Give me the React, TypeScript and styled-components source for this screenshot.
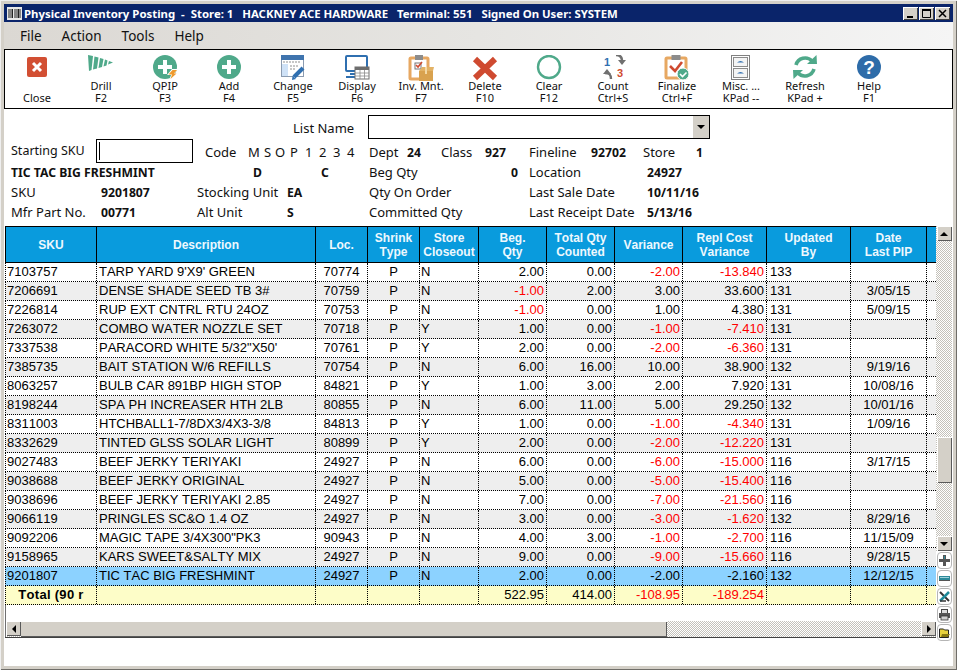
import React from 'react'
import styled, { createGlobalStyle } from 'styled-components'

const GlobalStyle = createGlobalStyle`
  html, body {
    margin: 0;
    padding: 0;
    background: #d4d0c8;
  }
`

const UI_FONT = '"Noto Sans", "Open Sans", sans-serif'
const GRID_FONT = '"Liberation Sans", Arial, sans-serif'
const GREEN = '#4fa98a'
const SILVER = '#d4d0c8'
const DITHER = `repeating-conic-gradient(#ffffff 0 25%, #c4c1ba 0 50%) 0 0 / 2px 2px`

const Window = styled.div`
  box-sizing: border-box;
  width: 957px;
  height: 670px;
  overflow: hidden;
  padding: 4px 4px 4px 4px;
  background: ${SILVER};
  box-shadow: inset 1px 1px 0 #efefef, inset -1px -1px 0 #6f6d68;
  font-family: ${UI_FONT};
`

const Inner = styled.div`
  height: 662px;
  background: #fff;
  display: flex;
  flex-direction: column;
`

const TitleBar = styled.div`
  height: 18px;
  flex: none;
  background: #0a246a;
  color: #fff;
  display: flex;
  align-items: center;
  padding: 0 3px 0 3px;
  font-size: 11.4px;
  font-weight: 700;
  white-space: pre;
`

const TitleText = styled.span`
  margin-left: 2px;
  flex: 1;
`

const TitleControls = styled.div`
  display: flex;
  gap: 1px;
`

const TitleButton = styled.div`
  width: 15px;
  height: 13px;
  background: ${SILVER};
  box-shadow: inset 1px 1px 0 #fff, inset -1px -1px 0 #404040;
  display: flex;
  align-items: center;
  justify-content: center;
`

const MenuBar = styled.div`
  height: 27px;
  flex: none;
  box-sizing: border-box;
  background: linear-gradient(90deg, #dbd8d3 0%, #e6e5e2 50%, #f5f5f5 100%);
  display: flex;
  align-items: center;
  gap: 20px;
  padding: 1px 0 0 16px;
  font-size: 13.5px;
  color: #111;
`

const Toolbar = styled.div`
  height: 60px;
  flex: none;
  box-sizing: border-box;
  border: 1px solid #000;
  display: flex;
  background: #fff;
`

const ToolButton = styled.div`
  width: 64px;
  flex: none;
  padding-top: 5px;
  display: flex;
  flex-direction: column;
  align-items: center;
`

const IconBox = styled.svg`
  width: 26px;
  height: 26px;
  margin-bottom: -1px;
  display: block;
  flex: none;
`

const ToolLabel = styled.div`
  font-size: 11px;
  line-height: 12px;
  height: 12px;
  color: #111;
  text-align: center;
  white-space: nowrap;
`

const Form = styled.div`
  height: 117px;
  flex: none;
  box-sizing: border-box;
  padding: 6px 0 0 7px;
  font-size: 13px;
  color: #111;
`

const Value = styled.span<{ $right?: boolean }>`
  font-size: 12.2px;
  font-weight: 700;
  text-align: ${({ $right }) => ($right ? 'right' : 'left')};
`

const FormRow = styled.div<{ $cols: string; $height?: number; $line?: number }>`
  display: grid;
  grid-template-columns: ${({ $cols }) => $cols};
  height: ${({ $height }) => $height ?? 20}px;
  line-height: ${({ $line }) => $line ?? 21}px;
  white-space: nowrap;

  ${Value} {
    line-height: ${({ $line }) => ($line ?? 21) + 1}px;
  }
`

const CodeLetters = styled.span`
  display: grid;
  grid-template-columns: 16px 11px 15px 15px 14px 14px 14px 14px;
`

const Combo = styled.div`
  box-sizing: border-box;
  height: 24px;
  border: 1px solid #000;
  display: flex;
  justify-content: flex-end;
`

const ComboButton = styled.div`
  width: 16px;
  background: ${SILVER};
  display: flex;
  align-items: center;
  justify-content: center;
`

const SkuInput = styled.div`
  box-sizing: border-box;
  height: 24px;
  border: 1px solid #000;
  background: #fff;
  display: flex;
  align-items: center;
  padding-left: 2px;
`

const Caret = styled.span`
  width: 1px;
  height: 18px;
  background: #000;
`

const StartLabel = styled.span`
  font-size: 12.5px;
  line-height: 23px;
`

const GridFrame = styled.div`
  flex: none;
  height: 412px;
  display: flex;
  margin-left: 1px;
`

const GridMain = styled.div`
  width: 931px;
  flex: none;
  display: flex;
  flex-direction: column;
  border-bottom: 1px solid #404040;
  box-sizing: border-box;
  font-family: ${GRID_FONT};
  font-kerning: none;
`

const COLUMNS = '91px 219px 52px 52px 59px 68px 68px 68px 84px 84px 76px 9px'

const HeaderRow = styled.div`
  display: grid;
  grid-template-columns: ${COLUMNS};
  height: 37px;
  flex: none;
  box-sizing: border-box;
  background: #099bdd;
  border: solid #000;
  border-width: 1px 0 1px 1px;
`

const HeaderCell = styled.div<{ $last?: boolean }>`
  display: flex;
  align-items: center;
  justify-content: center;
  text-align: center;
  color: #eef8fd;
  font-size: 12px;
  line-height: 14px;
  font-weight: 700;
  white-space: pre;
  ${({ $last }) => ($last ? '' : 'border-right: 1px solid #000;')}
`

const rowBackgrounds = {
  plain: '#ffffff',
  zebra: '#eeeeee',
  selected: '#8cd2ff',
  total: '#fdfdc8',
}

const DataRow = styled.div<{ $kind: keyof typeof rowBackgrounds }>`
  display: grid;
  grid-template-columns: ${COLUMNS};
  height: 19px;
  flex: none;
  box-sizing: border-box;
  background: ${({ $kind }) => rowBackgrounds[$kind]};
  border-left: 1px dotted #000;
  border-bottom: 1px dotted #000;
  font-size: 13px;
  line-height: 18px;
`

const Cell = styled.div<{ $align: string; $pad: number; $red?: boolean; $bold?: boolean; $open?: boolean }>`
  box-sizing: border-box;
  overflow: hidden;
  white-space: nowrap;
  text-align: ${({ $align }) => $align};
  padding: 0 ${({ $align, $pad }) => ($align === 'right' ? $pad : 0)}px 0 ${({ $align, $pad }) => ($align === 'left' ? $pad : 0)}px;
  color: ${({ $red }) => ($red ? '#ff0000' : '#000')};
  font-weight: ${({ $bold }) => ($bold ? 700 : 400)};
  letter-spacing: ${({ $bold }) => ($bold ? '0.3px' : '0')};
  ${({ $open }) => ($open ? '' : 'border-right: 1px dotted #000;')}
`

const GridSpacer = styled.div`
  flex: 1;
  border-left: 1px solid #707070;
`

const HScroll = styled.div`
  height: 16px;
  flex: none;
  display: flex;
  background: ${DITHER};
  border-left: 1px solid #707070;
  box-sizing: border-box;
`

const HThumb = styled.div`
  width: 646px;
  flex: none;
  background: ${SILVER};
  box-shadow: inset 0 1px 0 #fff, inset -1px -1px 0 #5a5a5a;
`

const ScrollFill = styled.div`
  flex: 1;
`

const ScrollButton = styled.div`
  width: 15px;
  height: 15px;
  flex: none;
  background: ${SILVER};
  box-shadow: inset 1px 1px 0 #fff, inset -1px -1px 0 #5a5a5a;
  display: flex;
  align-items: center;
  justify-content: center;
`

const Rail = styled.div`
  width: 17px;
  flex: none;
  display: flex;
  flex-direction: column;
`

const VScroll = styled.div`
  height: 325px;
  flex: none;
  display: flex;
  flex-direction: column;
  align-items: center;
  background: ${DITHER};
  width: 16px;
`

const VThumb = styled.div`
  width: 15px;
  height: 46px;
  flex: none;
  margin-top: 196px;
  background: ${SILVER};
  box-shadow: inset 1px 1px 0 #fff, inset -1px -1px 0 #5a5a5a;
`

const RailButtons = styled.div`
  display: flex;
  flex-direction: column;
  gap: 1px;
  padding: 1px 0 0 1px;
`

const RailButton = styled.div`
  box-sizing: border-box;
  width: 15px;
  height: 17px;
  background: #fff;
  border: 1px solid #b5b5b5;
  border-radius: 4px;
  display: flex;
  align-items: center;
  justify-content: center;
`

const Arrow = ({ dir }: { dir: 'up' | 'down' | 'left' | 'right' }) => {
  const points = {
    up: '0,5 8,5 4,1',
    down: '0,1 8,1 4,5',
    left: '6,0 6,8 2,4',
    right: '2,0 2,8 6,4',
  }[dir]
  return (
    <svg width="8" height={dir === 'up' || dir === 'down' ? 6 : 8} viewBox={dir === 'up' || dir === 'down' ? '0 0 8 6' : '0 0 8 8'}>
      <polygon points={points} fill="#000" />
    </svg>
  )
}

const PlusDisc = () => (
  <>
    <circle cx="13" cy="12" r="12" fill={GREEN} />
    <rect x="11" y="5" width="4" height="14" fill="#fff" />
    <rect x="6" y="10" width="14" height="4" fill="#fff" />
  </>
)

const icons: Record<string, React.ReactNode> = {
  close: (
    <>
      <rect x="3" y="2" width="20" height="20" rx="2" fill="#d24f33" />
      <path d="M9 8l8 8M17 8l-8 8" stroke="#fff" strokeWidth="3" />
    </>
  ),
  drill: (
    <g fill={GREEN}>
      <polygon points="0,0 5,1 3.5,15 1,16" />
      <polygon points="6.5,1.500 10.5,2.500 9,13.500 5,14.500" />
      <polygon points="12,3 15.5,4 14,12 10.5,13" />
      <polygon points="17,4.500 19.5,5.500 18.5,10.500 15.5,11.500" />
      <polygon points="21,6 25,7.500 20,9.500" />
    </g>
  ),
  qpip: (
    <>
      <PlusDisc />
      <polygon points="20,14 26,14 23,18 26,18 17,26 19,20 15,20" fill="#fff" />
      <polygon points="20.5,15 25,15 22,18.5 24.5,18.5 18.5,24 20,19.5 16.5,19.5" fill="#ee9a2e" />
    </>
  ),
  add: <PlusDisc />,
  change: (
    <>
      <rect x="1.5" y="0.5" width="22" height="21" fill="#fff" stroke="#8b9bb0" />
      <rect x="1" y="0" width="23" height="5" fill="#3f74ae" />
      <rect x="2" y="9" width="6" height="12" fill="#cfe2f7" />
      <path d="M3 7h18M10 11h9M10 14h6" stroke="#8f8f8f" strokeDasharray="2 1" />
      <path d="M23 13L14 22" stroke="#2f6fb0" strokeWidth="4" />
      <polygon points="12,25 12.5,21 16,24" fill="#2f6fb0" />
    </>
  ),
  display: (
    <>
      <rect x="2" y="1" width="21" height="15" rx="1" fill="#fff" stroke="#2f6fb0" strokeWidth="2" />
      <path d="M6 19h5M2 22h9" stroke="#2f6fb0" strokeWidth="2" />
      <rect x="11" y="12" width="14" height="12" fill="#fff" stroke="#6e6e6e" />
      <rect x="11" y="12" width="14" height="3" fill="#6e6e6e" />
      <path d="M11 18h14M11 21h14M16 15v9M20.5 15v9" stroke="#8a8a8a" strokeWidth="0.8" />
    </>
  ),
  inventory: (
    <>
      <rect x="2" y="3" width="18" height="21" rx="1" fill="#fff" stroke="#e7a862" strokeWidth="3" />
      <rect x="7" y="0" width="8" height="5" fill="#8c8c8c" />
      <rect x="7" y="8" width="6" height="6" fill="#fff" stroke="#777" />
      <path d="M8 10l2 2 4-5" stroke="#cf4a30" strokeWidth="1.6" fill="none" />
      <polygon points="11,16 14,12 26,12 25,16" fill="#e3b265" />
      <rect x="11" y="16" width="14" height="10" fill="#d9a24f" />
      <rect x="17" y="12" width="2" height="7" fill="#f3d9a6" />
    </>
  ),
  del: <path d="M3 4l20 19M23 4L3 23" stroke="#cf4a30" strokeWidth="6" />,
  clear: <circle cx="13" cy="12" r="11" fill="none" stroke={GREEN} strokeWidth="2.4" />,
  count: (
    <>
      <text x="4" y="11" fontFamily={GRID_FONT} fontSize="11" fontWeight="700" fill="#2f6fb0">1</text>
      <text x="17" y="22" fontFamily={GRID_FONT} fontSize="11" fontWeight="700" fill="#cf4a30">3</text>
      <path d="M16 0c5 0 6 3 6 6" fill="none" stroke="#707070" strokeWidth="2.4" />
      <polygon points="18,5 26,5 22,10" fill="#707070" />
      <path d="M11 24c0-5-2-6-6-6" fill="none" stroke="#707070" strokeWidth="2.4" />
      <polygon points="3,19 11,19 7,14" fill="#707070" />
    </>
  ),
  finalize: (
    <>
      <rect x="2" y="3" width="20" height="20" rx="1" fill="#fff" stroke="#e7a862" strokeWidth="3" />
      <rect x="7.5" y="0" width="9" height="5" fill="#8c8c8c" />
      <path d="M6 11l5 5 7-9" stroke="#cf4a30" strokeWidth="2.6" fill="none" />
      <circle cx="19" cy="19" r="6" fill={GREEN} stroke="#fff" />
      <path d="M16 19l2.5 2.5 4-4" stroke="#fff" strokeWidth="1.6" fill="none" />
    </>
  ),
  misc: (
    <>
      <rect x="3.5" y="0.5" width="18" height="24" fill="#fff" stroke="#808080" />
      <rect x="5.5" y="2.5" width="14" height="9" fill="#f4f4f4" stroke="#8c8c8c" />
      <rect x="5.5" y="13.5" width="14" height="9" fill="#f4f4f4" stroke="#8c8c8c" />
      <path d="M9 7.5q3.500-3 7 0zM9 18.500q3.500-3 7 0z" fill="#2f6fb0" />
    </>
  ),
  refresh: (
    <>
      <path d="M4 10A9.500 9.500 0 0 1 20 6" fill="none" stroke={GREEN} strokeWidth="3.600" />
      <polygon points="15,9 25,9 24.500,0" fill={GREEN} />
      <path d="M22 14A9.500 9.500 0 0 1 6 18" fill="none" stroke={GREEN} strokeWidth="3.600" />
      <polygon points="11,15 1,15 1.500,24" fill={GREEN} />
    </>
  ),
  help: (
    <>
      <circle cx="13" cy="12" r="12" fill="#2e6ca9" />
      <text x="13" y="19" textAnchor="middle" fontFamily={GRID_FONT} fontSize="19" fontWeight="700" fill="#fff">?</text>
    </>
  ),
}

const toolButtons: [string, string, string][] = [
  ['close', '', 'Close'],
  ['drill', 'Drill', 'F2'],
  ['qpip', 'QPIP', 'F3'],
  ['add', 'Add', 'F4'],
  ['change', 'Change', 'F5'],
  ['display', 'Display', 'F6'],
  ['inventory', 'Inv. Mnt.', 'F7'],
  ['del', 'Delete', 'F10'],
  ['clear', 'Clear', 'F12'],
  ['count', 'Count', 'Ctrl+S'],
  ['finalize', 'Finalize', 'Ctrl+F'],
  ['misc', 'Misc. ...', 'KPad --'],
  ['refresh', 'Refresh', 'KPad +'],
  ['help', 'Help', 'F1'],
]

const headers = ['SKU', 'Description', 'Loc.', 'Shrink\nType', 'Store\nCloseout', 'Beg.\nQty', 'Total Qty\nCounted', 'Variance', 'Repl Cost\nVariance', 'Updated\nBy', 'Date\nLast PIP', '']

const columnFormat: { align: string; pad: number }[] = [
  { align: 'left', pad: 1 },
  { align: 'left', pad: 2 },
  { align: 'center', pad: 0 },
  { align: 'center', pad: 0 },
  { align: 'left', pad: 1 },
  { align: 'right', pad: 2 },
  { align: 'right', pad: 2 },
  { align: 'right', pad: 2 },
  { align: 'right', pad: 2 },
  { align: 'left', pad: 3 },
  { align: 'center', pad: 0 },
]

const rows: string[][] = [
  ['7103757', "TARP YARD 9'X9' GREEN", '70774', 'P', 'N', '2.00', '0.00', '-2.00', '-13.840', '133', ''],
  ['7206691', 'DENSE SHADE SEED TB 3#', '70759', 'P', 'N', '-1.00', '2.00', '3.00', '33.600', '131', '3/05/15'],
  ['7226814', 'RUP EXT CNTRL RTU 24OZ', '70753', 'P', 'N', '-1.00', '0.00', '1.00', '4.380', '131', '5/09/15'],
  ['7263072', 'COMBO WATER NOZZLE SET', '70718', 'P', 'Y', '1.00', '0.00', '-1.00', '-7.410', '131', ''],
  ['7337538', 'PARACORD WHITE 5/32"X50\'', '70761', 'P', 'Y', '2.00', '0.00', '-2.00', '-6.360', '131', ''],
  ['7385735', 'BAIT STATION W/6 REFILLS', '70754', 'P', 'N', '6.00', '16.00', '10.00', '38.900', '132', '9/19/16'],
  ['8063257', 'BULB CAR 891BP HIGH STOP', '84821', 'P', 'Y', '1.00', '3.00', '2.00', '7.920', '131', '10/08/16'],
  ['8198244', 'SPA PH INCREASER HTH 2LB', '80855', 'P', 'N', '6.00', '11.00', '5.00', '29.250', '132', '10/01/16'],
  ['8311003', 'HTCHBALL1-7/8DX3/4X3-3/8', '84813', 'P', 'Y', '1.00', '0.00', '-1.00', '-4.340', '131', '1/09/16'],
  ['8332629', 'TINTED GLSS SOLAR LIGHT', '80899', 'P', 'Y', '2.00', '0.00', '-2.00', '-12.220', '131', ''],
  ['9027483', 'BEEF JERKY TERIYAKI', '24927', 'P', 'N', '6.00', '0.00', '-6.00', '-15.000', '116', '3/17/15'],
  ['9038688', 'BEEF JERKY ORIGINAL', '24927', 'P', 'N', '5.00', '0.00', '-5.00', '-15.400', '116', ''],
  ['9038696', 'BEEF JERKY TERIYAKI 2.85', '24927', 'P', 'N', '7.00', '0.00', '-7.00', '-21.560', '116', ''],
  ['9066119', 'PRINGLES SC&O 1.4 OZ', '24927', 'P', 'N', '3.00', '0.00', '-3.00', '-1.620', '132', '8/29/16'],
  ['9092206', 'MAGIC TAPE 3/4X300"PK3', '90943', 'P', 'N', '4.00', '3.00', '-1.00', '-2.700', '116', '11/15/09'],
  ['9158965', 'KARS SWEET&SALTY MIX', '24927', 'P', 'N', '9.00', '0.00', '-9.00', '-15.660', '116', '9/28/15'],
  ['9201807', 'TIC TAC BIG FRESHMINT', '24927', 'P', 'N', '2.00', '0.00', '-2.00', '-2.160', '132', '12/12/15'],
]

const totals = ['Total (90 r', '', '', '', '', '522.95', '414.00', '-108.95', '-189.254', '', '']

const railIcons = [
  <svg key="plus" width="11" height="11" viewBox="0 0 11 11">
    <path d="M4 0h3v4h4v3H7v4H4V7H0V4h4z" fill="#555" />
    <rect x="5" y="1" width="1" height="3" fill="#2d8a9a" />
  </svg>,
  <svg key="minus" width="11" height="5" viewBox="0 0 11 5">
    <rect width="11" height="5" fill="#2d8a9a" />
    <rect x="1" y="1" width="9" height="1" fill="#9fd3dc" />
    <rect y="4" width="11" height="1" fill="#555" />
  </svg>,
  <svg key="cancel" width="11" height="11" viewBox="0 0 11 11">
    <path d="M1 1l9 9" stroke="#333" strokeWidth="2" />
    <path d="M10 1L1 10" stroke="#1f8a9a" strokeWidth="2.500" />
    <path d="M1 10h6" stroke="#333" strokeWidth="1.500" />
  </svg>,
  <svg key="print" width="11" height="12" viewBox="0 0 11 12">
    <rect x="2.500" y="0.500" width="6" height="4" fill="#ddd" stroke="#444" />
    <rect x="0" y="4" width="11" height="5" fill="#555" />
    <rect x="2" y="7" width="7" height="4" fill="#cfcfcf" stroke="#333" strokeWidth="0.800" />
  </svg>,
  <svg key="folder" width="11" height="10" viewBox="0 0 11 10">
    <path d="M0.500 1h4l1 1h4v7.500H0.500z" fill="#e8d23c" stroke="#222" />
    <path d="M2 9l1-3h8l-2 3z" fill="#8a7a12" />
  </svg>,
]

function GridCells({ values, total, selected }: { values: string[]; total?: boolean; selected?: boolean }) {
  return (
    <>
      {values.map((value, i) => {
        const format = total && i === 0 ? { align: 'center', pad: 0 } : columnFormat[i]
        return (
          <Cell
            key={i}
            $align={format.align}
            $pad={format.pad}
            $bold={total && i === 0}
            $red={!selected && i >= 5 && i <= 8 && value.startsWith('-')}
          >
            {value}
          </Cell>
        )
      })}
      <Cell $align="left" $pad={0} $open />
    </>
  )
}

export default function App() {
  return (
    <>
      <GlobalStyle />
      <Window>
        <Inner>
          <TitleBar>
            <svg width="15" height="13" viewBox="0 0 15 13">
              <rect width="15" height="13" fill="#e8e8e8" />
              <path d="M2 2v9M4 2v9M5.500 2v9M8 2v9M10 2v9M11.500 2v9M13 2v9" stroke="#222" />
            </svg>
            <TitleText>{'Physical Inventory Posting  -  Store: 1   HACKNEY ACE HARDWARE   Terminal: 551   Signed On User: SYSTEM'}</TitleText>
            <TitleControls>
              <TitleButton>
                <svg width="9" height="9" viewBox="0 0 9 9"><rect x="1" y="7" width="6" height="2" fill="#000" /></svg>
              </TitleButton>
              <TitleButton>
                <svg width="9" height="9" viewBox="0 0 9 9"><path d="M0.500 1.500h8v7h-8z" fill="none" stroke="#000" /><rect y="0" width="9" height="2" fill="#000" /></svg>
              </TitleButton>
              <TitleButton>
                <svg width="9" height="9" viewBox="0 0 9 9"><path d="M1 1l7 7M8 1L1 8" stroke="#000" strokeWidth="1.500" /></svg>
              </TitleButton>
            </TitleControls>
          </TitleBar>

          <MenuBar>
            <span>File</span>
            <span>Action</span>
            <span>Tools</span>
            <span>Help</span>
          </MenuBar>

          <Toolbar>
            {toolButtons.map(([icon, first, second]) => (
              <ToolButton key={icon}>
                <IconBox viewBox="0 0 26 26">{icons[icon]}</IconBox>
                <ToolLabel>{first}</ToolLabel>
                <ToolLabel>{second}</ToolLabel>
              </ToolButton>
            ))}
          </Toolbar>

          <Form>
            <FormRow $cols="282px 75px 342px" $height={24} $line={26}>
              <span />
              <span>List Name</span>
              <Combo>
                <ComboButton>
                  <Arrow dir="down" />
                </ComboButton>
              </Combo>
            </FormRow>
            <FormRow $cols="85px 97px 12px 43px 121px 38px 34px 44px 44px 62px 52px 53px auto" $height={23} $line={27}>
              <StartLabel>Starting SKU</StartLabel>
              <SkuInput>
                <Caret />
              </SkuInput>
              <span />
              <span>Code</span>
              <CodeLetters>
                {['M', 'S', 'O', 'P', '1', '2', '3', '4'].map((c) => (
                  <span key={c}>{c}</span>
                ))}
              </CodeLetters>
              <span>Dept</span>
              <Value>24</Value>
              <span>Class</span>
              <Value>927</Value>
              <span>Fineline</span>
              <Value>92702</Value>
              <span>Store</span>
              <Value>1</Value>
            </FormRow>
            <FormRow $cols="242px 68px 48px 100px 49px 11px 118px auto">
              <Value>TIC TAC BIG FRESHMINT</Value>
              <Value>D</Value>
              <Value>C</Value>
              <span>Beg Qty</span>
              <Value $right>0</Value>
              <span />
              <span>Location</span>
              <Value>24927</Value>
            </FormRow>
            <FormRow $cols="90px 96px 90px 82px 160px 118px auto">
              <span>SKU</span>
              <Value>9201807</Value>
              <span>Stocking Unit</span>
              <Value>EA</Value>
              <span>Qty On Order</span>
              <span>Last Sale Date</span>
              <Value>10/11/16</Value>
            </FormRow>
            <FormRow $cols="90px 96px 90px 82px 160px 118px auto">
              <span>Mfr Part No.</span>
              <Value>00771</Value>
              <span>Alt Unit</span>
              <Value>S</Value>
              <span>Committed Qty</span>
              <span>Last Receipt Date</span>
              <Value>5/13/16</Value>
            </FormRow>
          </Form>

          <GridFrame>
            <GridMain>
              <HeaderRow>
                {headers.map((h, i) => (
                  <HeaderCell key={i} $last={i === headers.length - 1}>
                    {h}
                  </HeaderCell>
                ))}
              </HeaderRow>
              {rows.map((row, i) => (
                <DataRow key={row[0]} $kind={i === rows.length - 1 ? 'selected' : i % 2 ? 'zebra' : 'plain'}>
                  <GridCells values={row} selected={i === rows.length - 1} />
                </DataRow>
              ))}
              <DataRow $kind="total">
                <GridCells values={totals} total />
              </DataRow>
              <GridSpacer />
              <HScroll>
                <ScrollButton>
                  <Arrow dir="left" />
                </ScrollButton>
                <HThumb />
                <ScrollFill />
                <ScrollButton>
                  <Arrow dir="right" />
                </ScrollButton>
              </HScroll>
            </GridMain>
            <Rail>
              <VScroll>
                <ScrollButton>
                  <Arrow dir="up" />
                </ScrollButton>
                <VThumb />
                <ScrollFill />
                <ScrollButton>
                  <Arrow dir="down" />
                </ScrollButton>
              </VScroll>
              <RailButtons>
                {railIcons.map((icon) => (
                  <RailButton key={icon.key}>{icon}</RailButton>
                ))}
              </RailButtons>
            </Rail>
          </GridFrame>
        </Inner>
      </Window>
    </>
  )
}
